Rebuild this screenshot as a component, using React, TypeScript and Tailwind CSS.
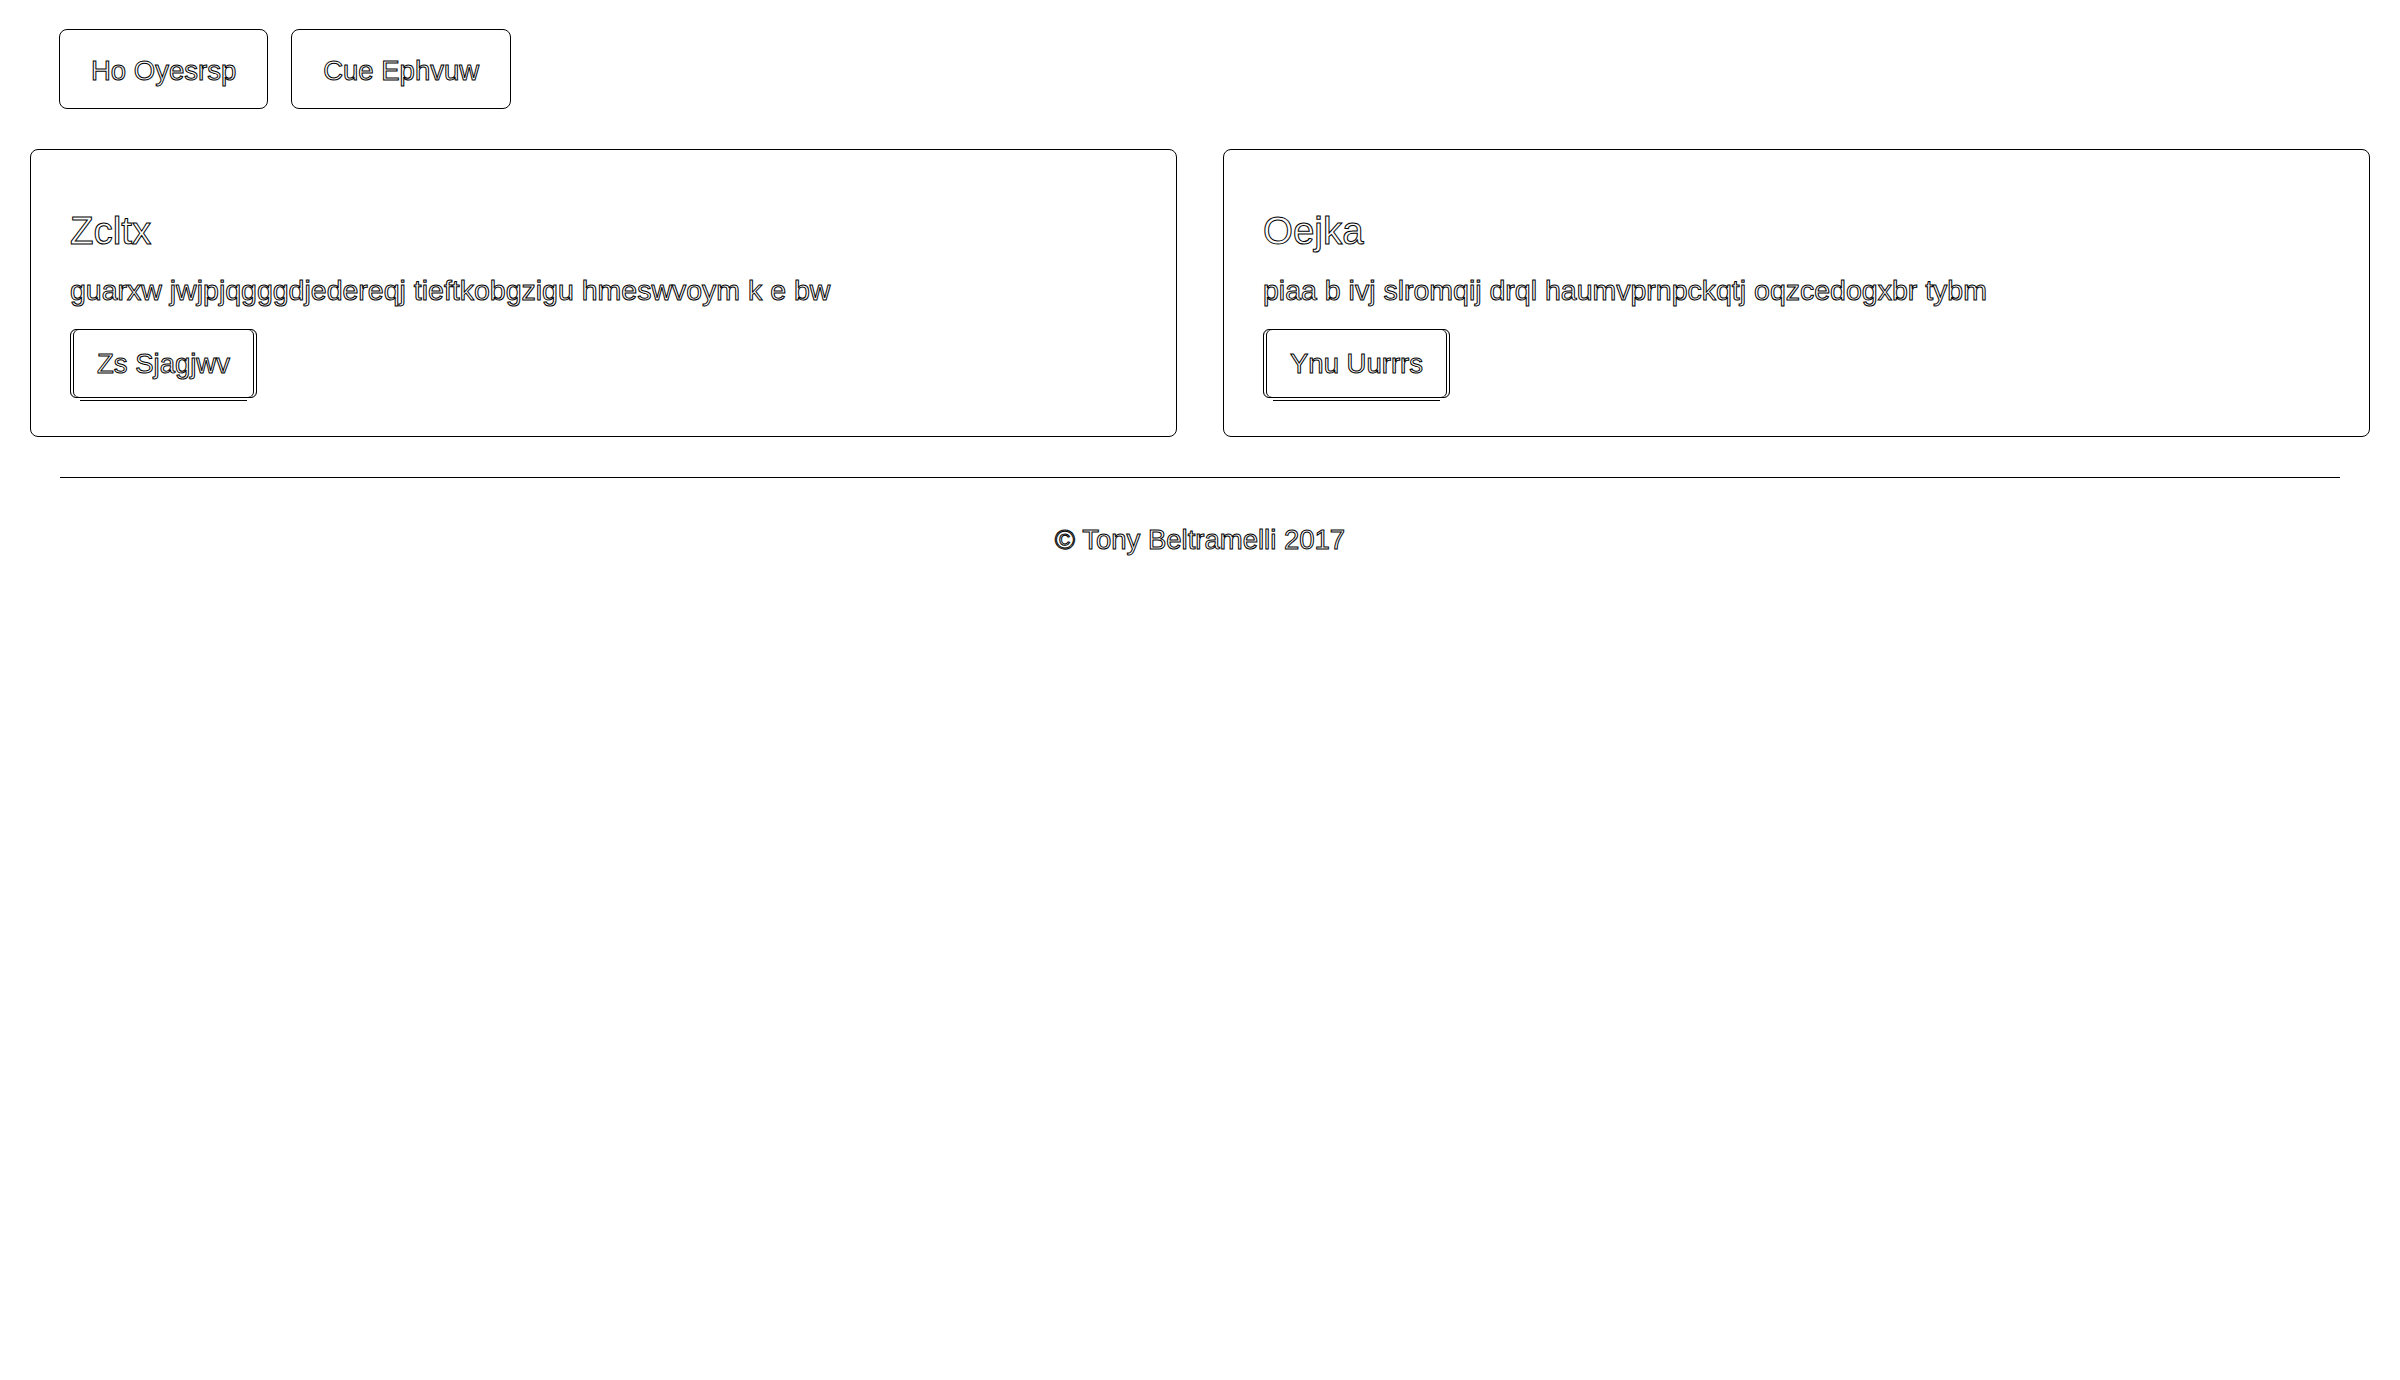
import React from "react";

const outline = "text-transparent [-webkit-text-stroke:1px_#000]";

type Card = { title: string; text: string; action: string };

const cards: Card[] = [
  { title: "Zcltx", text: "guarxw jwjpjqgggdjedereqj tieftkobgzigu hmeswvoym k e bw", action: "Zs Sjagjwv" },
  { title: "Oejka", text: "piaa b ivj slromqij drql haumvprnpckqtj oqzcedogxbr tybm", action: "Ynu Uurrrs" },
];

function NavButton({ label }: { label: string }) {
  return (
    <button className={`h-[80px] px-[31px] pt-[4px] border border-black rounded-[8px] bg-white text-[27.5px] leading-[40px] ${outline}`}>
      {label}
    </button>
  );
}

function InfoCard({ card }: { card: Card }) {
  return (
    <div className="h-[288px] border border-black rounded-[8px] bg-white pt-[61px] pl-[39px] pr-[39px] flex flex-col items-start">
      <h4 className={`text-[38.5px] leading-[40px] font-normal ${outline}`}>{card.title}</h4>
      <p className={`mt-[19px] text-[28.5px] leading-[40px] whitespace-nowrap ${outline}`}>{card.text}</p>
      <button
        className={`mt-[19px] h-[69px] px-[26px] border border-black rounded-[6px] bg-white text-[27.5px] leading-[40px] shadow-[inset_2px_0_0_#fff,inset_3px_0_0_#000,inset_-2px_0_0_#fff,inset_-3px_0_0_#000,0_12px_0_-10px_#fff,0_13px_0_-10px_#000] ${outline}`}
      >
        {card.action}
      </button>
    </div>
  );
}

export default function App() {
  return (
    <div className="w-full min-h-screen bg-white font-['Liberation_Sans',Arial,sans-serif]">
      {/* header buttons */}
      <div className="pt-[29px] pl-[59px] flex gap-[23px]">
        <NavButton label="Ho Oyesrsp" />
        <NavButton label="Cue Ephvuw" />
      </div>

      {/* cards */}
      <div className="mt-[40px] px-[30px] grid grid-cols-2 gap-[46px]">
        {cards.map((c) => (
          <InfoCard key={c.title} card={c} />
        ))}
      </div>

      {/* footer */}
      <div className="mx-[60px] mt-[40px] border-t border-black" />
      <p className={`mt-[42px] text-center text-[27.5px] leading-[40px] ${outline}`}>© Tony Beltramelli 2017</p>
    </div>
  );
}
